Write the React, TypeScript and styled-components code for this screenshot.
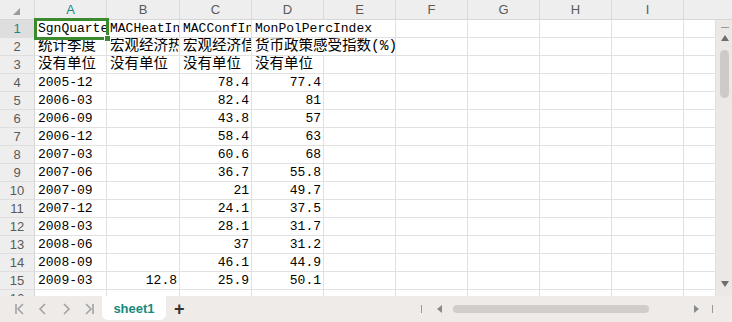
import styled, { createGlobalStyle } from "styled-components";

const GlobalStyle = createGlobalStyle`
  html, body {
    margin: 0;
    padding: 0;
    background: #ffffff;
  }
  * {
    box-sizing: border-box;
  }
`;

const COLS = "35px 72px 73px 72px 72px 72px 72px 72px 72px 72px 1fr";
const LETTERS = ["A", "B", "C", "D", "E", "F", "G", "H", "I"];

type Cell = { text: string; num?: boolean; cjk?: boolean; span?: number };

const rows: Cell[][] = [
  [
    { text: "SgnQuarter" },
    { text: "MACHeatIndex" },
    { text: "MACConfIndex" },
    { text: "MonPolPercIndex", span: 2 },
  ],
  [
    { text: "统计季度", cjk: true },
    { text: "宏观经济热度指数", cjk: true },
    { text: "宏观经济信心指数", cjk: true },
    { text: "货币政策感受指数(%)", cjk: true, span: 2 },
  ],
  [
    { text: "没有单位", cjk: true },
    { text: "没有单位", cjk: true },
    { text: "没有单位", cjk: true },
    { text: "没有单位", cjk: true },
  ],
];

const data = [
  ["2005-12", "", "78.4", "77.4"],
  ["2006-03", "", "82.4", "81"],
  ["2006-09", "", "43.8", "57"],
  ["2006-12", "", "58.4", "63"],
  ["2007-03", "", "60.6", "68"],
  ["2007-06", "", "36.7", "55.8"],
  ["2007-09", "", "21", "49.7"],
  ["2007-12", "", "24.1", "37.5"],
  ["2008-03", "", "28.1", "31.7"],
  ["2008-06", "", "37", "31.2"],
  ["2008-09", "", "46.1", "44.9"],
  ["2009-03", "12.8", "25.9", "50.1"],
];

data.forEach((d) => {
  rows.push([
    { text: d[0] },
    { text: d[1], num: true },
    { text: d[2], num: true },
    { text: d[3], num: true },
  ]);
});
rows.push([{ text: "" }, { text: "" }, { text: "" }, { text: "" }]);

const Window = styled.div`
  width: 732px;
  height: 322px;
  display: flex;
  flex-direction: column;
  overflow: hidden;
  background: #ffffff;
`;

const Sheet = styled.div`
  position: relative;
  flex: 1;
  display: flex;
  flex-direction: column;
  min-height: 0;
`;

const HeaderRow = styled.div`
  display: grid;
  grid-template-columns: ${COLS};
  height: 20px;
  background: #eeeeee;
  border-bottom: 1px solid #d6d6d6;
`;

const ColHead = styled.div<{ $active?: boolean }>`
  display: flex;
  align-items: center;
  justify-content: center;
  border-right: 1px solid #dadada;
  font-family: "Liberation Sans", Arial, sans-serif;
  font-size: 13px;
  color: ${(p) => (p.$active ? "#178a7e" : "#5a5a5a")};

  &:last-child {
    border-right: none;
  }
`;

const Corner = styled(ColHead)`
  align-items: flex-end;
  justify-content: flex-end;
  padding: 0 14px 4px 0;
`;

const Body = styled.div`
  flex: 1;
  display: flex;
  min-height: 0;
`;

const Grid = styled.div`
  flex: 1;
  display: grid;
  grid-template-columns: ${COLS};
  grid-auto-rows: 18px;
  overflow: hidden;
`;

const RowHead = styled.div<{ $active?: boolean }>`
  display: flex;
  align-items: center;
  justify-content: center;
  background: ${(p) => (p.$active ? "#dedede" : "#eeeeee")};
  border-right: 1px solid #d6d6d6;
  border-bottom: 1px solid #dedede;
  font-family: "Liberation Sans", Arial, sans-serif;
  font-size: 13px;
  color: ${(p) => (p.$active ? "#178a7e" : "#5a5a5a")};
`;

const DataCell = styled.div<{ $num?: boolean; $cjk?: boolean; $span?: number }>`
  grid-column: span ${(p) => p.$span || 1};
  padding: 0 2px 0 3px;
  border-right: 1px solid #e1e1e1;
  border-bottom: 1px solid #e1e1e1;
  font-family: "Liberation Mono", "Noto Sans CJK SC", monospace;
  font-size: ${(p) => (p.$cjk ? "14.5px" : "13px")};
  line-height: 17px;
  color: #000000;
  white-space: nowrap;
  overflow: hidden;
  text-align: ${(p) => (p.$num ? "right" : "left")};
`;

const VScroll = styled.div`
  width: 16px;
  background: #ece8e6;
  display: flex;
  flex-direction: column;
  align-items: center;
  padding: 7px 0 9px 1px;
`;

const Dash = styled.div`
  width: 8px;
  height: 1px;
  background: #9a9a9a;
`;

const Thumb = styled.div`
  width: 9px;
  height: 48px;
  border-radius: 5px;
  background: #cdcac8;
  margin-top: 9px;
`;

const Spacer = styled.div`
  flex: 1;
`;

const Selection = styled.div`
  position: absolute;
  left: 34px;
  top: 18px;
  width: 75px;
  height: 22px;
  border: 3px solid #3b8a2d;
  pointer-events: none;
`;

const Handle = styled.div`
  position: absolute;
  left: 104px;
  top: 35px;
  width: 7px;
  height: 7px;
  background: #3b8a2d;
  border: 1px solid #ffffff;
`;

const BottomBar = styled.div`
  height: 26px;
  background: #eeebe9;
  display: flex;
  align-items: flex-start;
`;

const NavGroup = styled.div`
  display: flex;
  align-items: center;
  height: 26px;
  gap: 11px;
  padding-left: 14px;
  width: 102px;
`;

const NavBtn = styled.svg`
  width: 12px;
  height: 12px;
  flex: none;
`;

const Tab = styled.div`
  width: 64px;
  height: 24px;
  background: #ffffff;
  border-radius: 0 0 6px 6px;
  display: flex;
  align-items: center;
  justify-content: center;
  font-family: "Liberation Sans", Arial, sans-serif;
  font-weight: bold;
  font-size: 13px;
  color: #178a7e;
`;

const Plus = styled.div`
  height: 26px;
  display: flex;
  align-items: center;
  padding-left: 8px;
  font-family: "Liberation Sans", Arial, sans-serif;
  font-weight: bold;
  font-size: 18px;
  color: #333333;
`;

const HScroll = styled.div`
  display: flex;
  align-items: center;
  height: 26px;
  padding-right: 19px;
`;

const Sep = styled.div<{ $gap?: number }>`
  width: 1px;
  height: 8px;
  background: #9a9a9a;
  margin-left: ${(p) => p.$gap || 0}px;
`;

const Arrow = styled.svg<{ $gap?: number }>`
  width: 6px;
  height: 8px;
  margin-left: ${(p) => p.$gap || 0}px;
`;

const HThumb = styled.div`
  width: 196px;
  height: 8px;
  border-radius: 4px;
  background: #d0cdcb;
  margin-left: 10px;
`;

function Tri({ dir }: { dir: "up" | "down" }) {
  return (
    <svg width="8" height="6" viewBox="0 0 8 6" style={{ marginTop: dir === "up" ? 7 : 0 }}>
      <path d={dir === "up" ? "M0 6 L4 0 L8 6 Z" : "M0 0 L8 0 L4 6 Z"} fill="#6e6e6e" />
    </svg>
  );
}

export default function App() {
  return (
    <Window>
      <GlobalStyle />
      <Sheet>
        <HeaderRow>
          <Corner>
            <svg width="7" height="7" viewBox="0 0 7 7">
              <path d="M7 0 L7 7 L0 7 Z" fill="#9b9b9b" />
            </svg>
          </Corner>
          {LETTERS.map((l) => (
            <ColHead key={l} $active={l === "A"}>
              {l}
            </ColHead>
          ))}
          <ColHead />
        </HeaderRow>
        <Body>
          <Grid>
            {rows.map((r, i) => {
              const used = r.reduce((s, c) => s + (c.span || 1), 0);
              return [
                <RowHead key={`h${i}`} $active={i === 0}>
                  {i + 1}
                </RowHead>,
                ...r.map((c, j) => (
                  <DataCell key={`c${i}-${j}`} $num={c.num} $cjk={c.cjk} $span={c.span}>
                    {c.text}
                  </DataCell>
                )),
                ...Array.from({ length: 10 - used }).map((_, k) => (
                  <DataCell key={`e${i}-${k}`} />
                )),
              ];
            })}
          </Grid>
          <VScroll>
            <Dash />
            <Tri dir="up" />
            <Thumb />
            <Spacer />
            <Tri dir="down" />
          </VScroll>
        </Body>
        <Selection />
        <Handle />
      </Sheet>
      <BottomBar>
        <NavGroup>
          <NavBtn viewBox="0 0 12 12">
            <path d="M2 1 V11 M9 1 L4 6 L9 11" stroke="#a3a3a3" strokeWidth="1.6" fill="none" />
          </NavBtn>
          <NavBtn viewBox="0 0 12 12">
            <path d="M8 1 L3 6 L8 11" stroke="#a3a3a3" strokeWidth="1.6" fill="none" />
          </NavBtn>
          <NavBtn viewBox="0 0 12 12">
            <path d="M4 1 L9 6 L4 11" stroke="#a3a3a3" strokeWidth="1.6" fill="none" />
          </NavBtn>
          <NavBtn viewBox="0 0 12 12">
            <path d="M3 1 L8 6 L3 11 M10 1 V11" stroke="#a3a3a3" strokeWidth="1.6" fill="none" />
          </NavBtn>
        </NavGroup>
        <Tab>sheet1</Tab>
        <Plus>+</Plus>
        <Spacer />
        <HScroll>
          <Sep />
          <Arrow $gap={15} viewBox="0 0 6 8">
            <path d="M5 0 L5 8 L0 4 Z" fill="#8a8a8a" />
          </Arrow>
          <HThumb />
          <Arrow $gap={45} viewBox="0 0 6 8">
            <path d="M0 0 L0 8 L5 4 Z" fill="#8a8a8a" />
          </Arrow>
          <Sep $gap={12} />
        </HScroll>
      </BottomBar>
    </Window>
  );
}
